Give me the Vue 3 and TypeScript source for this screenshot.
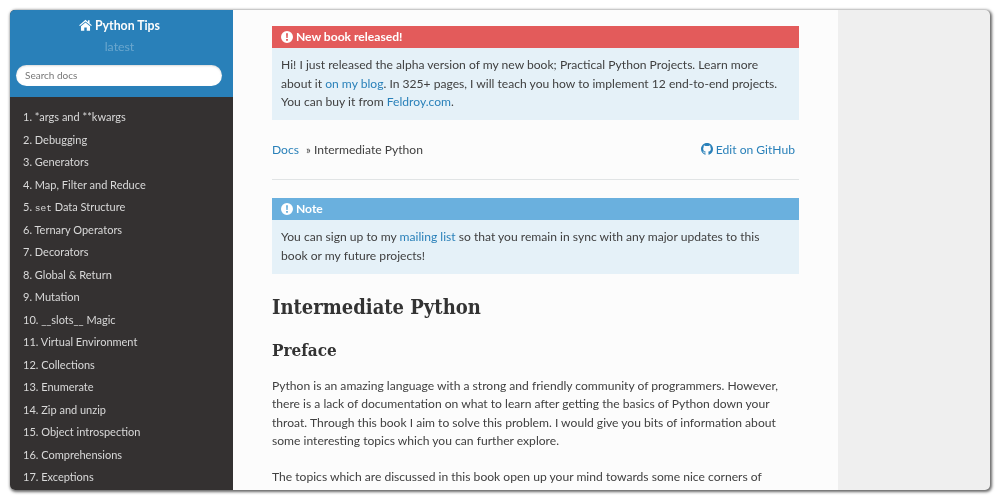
<template>
  <div class="page">
    <div class="window">
      <aside class="sidebar">
        <div class="side-head">
          <div class="brand">
            <svg class="home" viewBox="0 0 16 14" width="13" height="12">
              <path d="M8 0.6 0.2 7.2l0.9 1.1L8 2.6l6.9 5.7 0.9-1.1L13 4.9V1.2h-2v2L8 0.6zM2.4 8.6V14h4.1v-3.8h3V14h4.1V8.6L8 3.9 2.4 8.6z" fill="#fff" />
            </svg>
            Python Tips
          </div>
          <div class="version">latest</div>
          <div class="search">Search docs</div>
        </div>
        <ol class="toc">
          <li v-for="(item, i) in toc" :key="i">
            {{ i + 1 }}. <code v-if="item.code">{{ item.code }}</code> {{ item.label }}
          </li>
        </ol>
      </aside>
      <main class="main">
        <div class="content">
          <section class="note danger">
            <div class="note-title">
              <svg class="info" viewBox="0 0 14 14" width="12" height="12"><use href="#alert" /></svg>
              New book released!
            </div>
            <p>Hi! I just released the alpha version of my new book; Practical Python Projects. Learn more about it <a>on my blog</a>. In 325+ pages, I will teach you how to implement 12 end-to-end projects. You can buy it from <a>Feldroy.com</a>.</p>
          </section>

          <div class="crumbs">
            <span><a>Docs</a> <span class="sep">»</span> Intermediate Python</span>
            <a class="edit">
              <svg viewBox="0 0 16 16" width="12" height="12">
                <path fill="#2980b9" d="M8 0C3.58 0 0 3.58 0 8c0 3.54 2.29 6.53 5.47 7.59.4.07.55-.17.55-.38 0-.19-.01-.82-.01-1.49-2.01.37-2.53-.49-2.69-.94-.09-.23-.48-.94-.82-1.13-.28-.15-.68-.52-.01-.53.63-.01 1.08.58 1.23.82.72 1.21 1.87.87 2.33.66.07-.52.28-.87.51-1.07-1.78-.2-3.64-.89-3.64-3.95 0-.87.31-1.59.82-2.15-.08-.2-.36-1.02.08-2.12 0 0 .67-.21 2.2.82.64-.18 1.32-.27 2-.27s1.36.09 2 .27c1.53-1.04 2.2-.82 2.2-.82.44 1.1.16 1.92.08 2.12.51.56.82 1.27.82 2.15 0 3.07-1.87 3.75-3.65 3.95.29.25.54.73.54 1.48 0 1.07-.01 1.93-.01 2.2 0 .21.15.46.55.38A8.013 8.013 0 0016 8c0-4.42-3.58-8-8-8z" />
              </svg>
              Edit on GitHub
            </a>
          </div>
          <hr />

          <section class="note info-note">
            <div class="note-title">
              <svg class="info" viewBox="0 0 14 14" width="12" height="12"><use href="#alert" /></svg>
              Note
            </div>
            <p>You can sign up to my <a>mailing list</a> so that you remain in sync with any major updates to this book or my future projects!</p>
          </section>

          <h1>Intermediate Python</h1>
          <h2>Preface</h2>
          <p class="body">Python is an amazing language with a strong and friendly community of programmers. However, there is a lack of documentation on what to learn after getting the basics of Python down your throat. Through this book I aim to solve this problem. I would give you bits of information about some interesting topics which you can further explore.</p>
          <p class="body">The topics which are discussed in this book open up your mind towards some nice corners of Python programming and show you things you may not have come across before.</p>
        </div>
      </main>
      <div class="gutter"></div>
    </div>
    <svg width="0" height="0" class="defs">
      <symbol id="alert" viewBox="0 0 14 14">
        <path fill="#fff" fill-rule="evenodd" d="M7 0a7 7 0 1 0 0 14A7 7 0 0 0 7 0zM5.9 2.6h2.2l-.3 5.6H6.2l-.3-5.6zM5.9 9.2h2.2v2.1H5.9V9.2z" />
      </symbol>
    </svg>
  </div>
</template>

<script setup lang="ts">
interface TocItem {
  label: string;
  code?: string;
}

const toc: TocItem[] = [
  { label: '*args and **kwargs' },
  { label: 'Debugging' },
  { label: 'Generators' },
  { label: 'Map, Filter and Reduce' },
  { code: 'set', label: 'Data Structure' },
  { label: 'Ternary Operators' },
  { label: 'Decorators' },
  { label: 'Global & Return' },
  { label: 'Mutation' },
  { label: '__slots__ Magic' },
  { label: 'Virtual Environment' },
  { label: 'Collections' },
  { label: 'Enumerate' },
  { label: 'Zip and unzip' },
  { label: 'Object introspection' },
  { label: 'Comprehensions' },
  { label: 'Exceptions' },
];
</script>

<style>
html,
body {
  margin: 0;
  background: #fff;
}
</style>

<style scoped>
.page {
  width: 1000px;
  height: 500px;
  padding: 10px;
  box-sizing: border-box;
  font-family: Lato, "Liberation Sans", sans-serif;
  color: #404040;
  overflow: hidden;
}

.defs {
  position: absolute;
}

.window {
  display: flex;
  height: 480px;
  overflow: hidden;
  border-radius: 5px;
  box-shadow: 1px 1px 3px 1px rgba(0, 0, 0, 0.6);
  background: #efefef;
  filter: blur(0.3px);
}

.sidebar {
  width: 223px;
  flex: none;
  background: #343131;
}

.side-head {
  height: 87px;
  box-sizing: border-box;
  padding: 7px 4px 0 0;
  background: #2980b9;
  text-align: center;
}

.brand {
  color: #fcfcfc;
  font-size: 12.3px;
  font-weight: 700;
  line-height: 17px;
}

.home {
  vertical-align: -1px;
}

.version {
  margin-top: 5px;
  color: rgba(255, 255, 255, 0.3);
  font-size: 12.3px;
  line-height: 15px;
}

.search {
  margin: 11px 7px 0 6px;
  height: 21px;
  padding-left: 9px;
  border-radius: 11px;
  background: #fff;
  color: #777;
  font-size: 10px;
  line-height: 21px;
  text-align: left;
  box-shadow: inset 0 1px 2px rgba(0, 0, 0, 0.15);
}

.toc {
  margin: 0;
  padding: 9px 0 0 13px;
  list-style: none;
  color: #d9d9d9;
  font-size: 11px;
}

.toc li {
  height: 22.5px;
  line-height: 22.5px;
  white-space: nowrap;
}

.toc code {
  font-family: "Liberation Mono", monospace;
  font-size: 9.5px;
}

.main {
  width: 605px;
  flex: none;
  background: #fcfcfc;
}

.content {
  width: 527px;
  margin-left: 39px;
  padding-top: 16px;
  font-size: 12.1px;
  line-height: 18.6px;
}

a {
  color: #2980b9;
}

.note {
  background: #e5f1f8;
}

.note p {
  margin: 0;
  padding: 8px 15px 8px 9px;
}

.note-title {
  height: 22px;
  padding-left: 9px;
  color: #fff;
  font-weight: 700;
  line-height: 22px;
}

.note-title .info {
  vertical-align: -1.5px;
}

.danger .note-title {
  background: #e35b5b;
}

.info-note .note-title {
  background: #6ab0de;
}

.crumbs {
  display: flex;
  justify-content: space-between;
  margin-top: 21px;
  margin-right: 4px;
}

.sep {
  margin-left: 4px;
  font-size: 11px;
}

.edit svg {
  vertical-align: -1.5px;
}

hr {
  height: 1px;
  margin: 20px 0 18px;
  border: 0;
  background: #e1e4e5;
}

h1,
h2 {
  margin: 0;
  font-family: "DejaVu Serif Condensed", "DejaVu Serif", serif;
  font-weight: 700;
  color: #333;
}

h1 {
  margin-top: 20px;
  font-size: 20px;
  line-height: 26px;
}

h2 {
  margin-top: 18px;
  font-size: 17px;
  line-height: 24px;
}

.body {
  margin: 15px 0 17.5px;
}
</style>
